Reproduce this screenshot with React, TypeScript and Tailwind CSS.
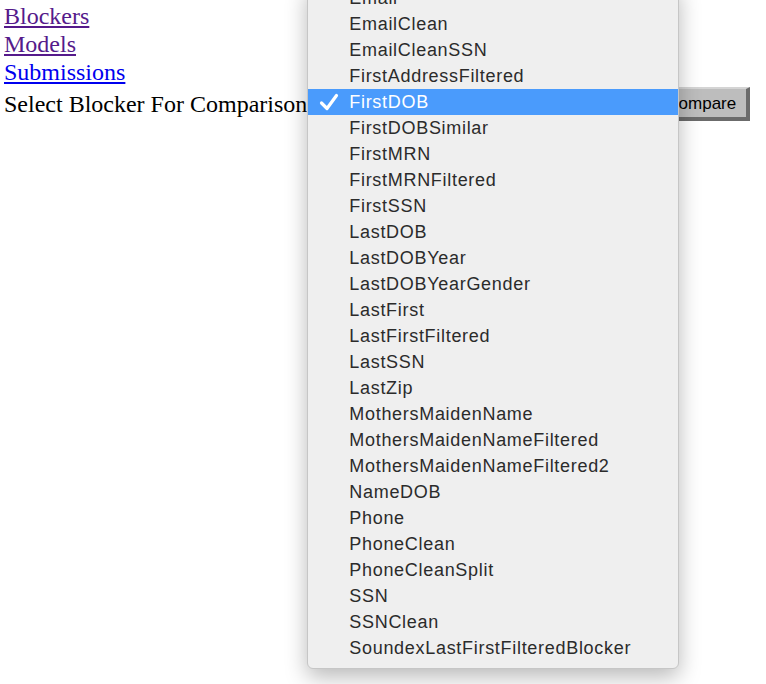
import React from "react";

const blockers = [
  "Email",
  "EmailClean",
  "EmailCleanSSN",
  "FirstAddressFiltered",
  "FirstDOB",
  "FirstDOBSimilar",
  "FirstMRN",
  "FirstMRNFiltered",
  "FirstSSN",
  "LastDOB",
  "LastDOBYear",
  "LastDOBYearGender",
  "LastFirst",
  "LastFirstFiltered",
  "LastSSN",
  "LastZip",
  "MothersMaidenName",
  "MothersMaidenNameFiltered",
  "MothersMaidenNameFiltered2",
  "NameDOB",
  "Phone",
  "PhoneClean",
  "PhoneCleanSplit",
  "SSN",
  "SSNClean",
  "SoundexLastFirstFilteredBlocker",
];

const selected = "FirstDOB";

export default function App() {
  return (
    <div className="relative min-h-[684px] overflow-hidden bg-white pl-[4px] pt-[2px] font-['Liberation_Serif',serif] text-[24px] leading-[28px] text-black">
      {/* Nav links */}
      <a href="#" className="text-[#551a8b] underline">Blockers</a>
      <br />
      <a href="#" className="text-[#551a8b] underline">Models</a>
      <br />
      <a href="#" className="text-[#0000ee] underline">Submissions</a>
      <br />

      {/* Compare row */}
      <div className="flex h-[36px] items-center">
        <span>Select Blocker For Comparison</span>
        <div className="relative h-[30px] w-[351px]">
          {/* open select menu */}
          <div className="absolute left-0 top-[-105px] z-10 w-[372px] rounded-[6px] border border-[#c6c6c6] bg-[#efefef] pb-[7px] shadow-[0_8px_22px_rgba(0,0,0,0.28)] font-['Liberation_Sans',sans-serif] text-[18px] tracking-[0.7px] text-[#2b2b2b]">
            {blockers.map((b) => {
              const active = b === selected;
              return (
                <div
                  key={b}
                  className={
                    active
                      ? "flex h-[26px] items-center bg-[#4a9bfc] text-white"
                      : "flex h-[26px] items-center"
                  }
                >
                  <span className="flex w-[41px] justify-center pl-[1px]">
                    {active && (
                      <svg width="20" height="18" viewBox="0 0 20 18" fill="none">
                        <path
                          d="M2.5 10 L8 15.5 L17.5 2.5"
                          stroke="white"
                          strokeWidth="3.2"
                          strokeLinecap="round"
                          strokeLinejoin="round"
                        />
                      </svg>
                    )}
                  </span>
                  <span>{b}</span>
                </div>
              );
            })}
          </div>
        </div>
        <button className="h-[34px] border-t-2 border-l-2 border-r-4 border-b-4 border-t-[#d4d4d4] border-l-[#d4d4d4] border-r-[#6b6b6b] border-b-[#6b6b6b] bg-[#bdbdbd] pl-[6px] pr-[10px] font-['Liberation_Sans',sans-serif] text-[17px] leading-none text-black">
          Compare
        </button>
      </div>
    </div>
  );
}
